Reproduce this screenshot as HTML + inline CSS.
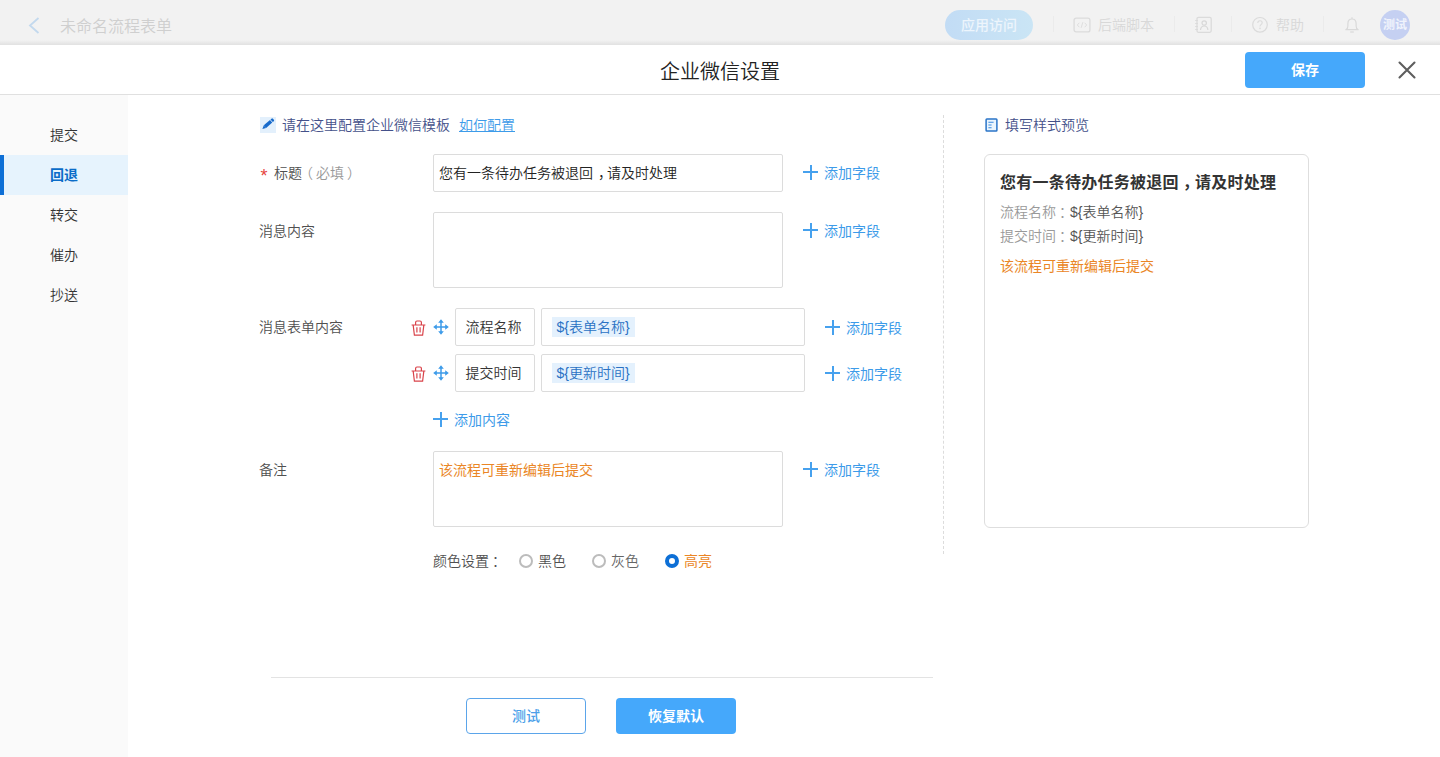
<!DOCTYPE html>
<html lang="zh-CN">
<head>
<meta charset="utf-8">
<title>企业微信设置</title>
<style>
*{box-sizing:border-box;margin:0;padding:0}
html,body{width:1440px;height:757px;overflow:hidden;background:#fff}
body{font-weight:350;font-family:"Liberation Sans","Noto Sans CJK SC",sans-serif;font-size:14px;color:#333;position:relative}
.abs{position:absolute;white-space:nowrap}
#topbar{left:0;top:0;width:1440px;height:45px;background:#f2f2f2}
#topshadow{left:0;top:40px;width:1440px;height:5px;background:linear-gradient(to bottom,rgba(0,0,0,0),rgba(0,0,0,.07))}
#header{left:0;top:45px;width:1440px;height:50px;background:#fff;border-bottom:1px solid #e0e0e0}
#side{left:0;top:95px;width:128px;height:662px;background:#fafafa}
.nav{left:0;width:128px;height:40px;line-height:40px;padding-left:50px;font-size:14px;color:#333}
.nav.on{background:#e6f3fd;color:#0a6cc8;font-weight:bold;border-left:4px solid #0d6fd6;padding-left:46px}
.sep{top:16px;width:1px;height:16px;background:#ebebeb}
.lbl{font-size:14px;color:#505050;line-height:20px}
.inp{border:1px solid #dcdcdc;border-radius:2px;background:#fff}
.add{color:#3d9be9;font-size:14px;font-weight:400;line-height:20px}
.plus{position:absolute;width:15px;height:15px}
.plus:before{content:"";position:absolute;left:0;top:6.5px;width:15px;height:2px;background:#46a1ee}
.plus:after{content:"";position:absolute;left:6.5px;top:0;width:2px;height:15px;background:#46a1ee}
.tag{background:#e4f1fd;color:#2a72c4;font-size:14px;line-height:20px;height:20px;width:82.5px;padding:0 0 0 4.5px}
</style>
</head>
<body>
<!-- top bar -->
<div class="abs" id="topbar"></div>
<div class="abs" id="topshadow"></div>
<svg class="abs" style="left:27px;top:17px" width="14" height="17" viewBox="0 0 14 17"><path d="M11.5 1 L3 8.5 L11.5 16" fill="none" stroke="#c3d9ee" stroke-width="1.8"/></svg>
<div class="abs" style="left:60px;top:15px;font-size:16px;line-height:24px;color:#cfcfcf">未命名流程表单</div>
<div class="abs" style="left:945px;top:10px;width:88px;height:30px;border-radius:15px;background:linear-gradient(to right,#c2dcf5,#cae5f5);color:#edf5fc;font-size:14px;font-weight:500;line-height:31px;text-align:center">应用访问</div>
<div class="abs sep" style="left:1053px"></div>
<svg class="abs" style="left:1073px;top:17px" width="18" height="16" viewBox="0 0 18 16"><rect x="1.1" y="1.1" width="15.8" height="13.8" rx="2" fill="none" stroke="#dbdbdb" stroke-width="1.3"/><path d="M6.3 5.8 L4.3 8 L6.3 10.2 M11.7 5.8 L13.7 8 L11.7 10.2 M9.8 5.2 L8.2 10.8" fill="none" stroke="#dedede" stroke-width="1"/></svg>
<div class="abs" style="left:1098px;top:15px;font-size:14px;line-height:20px;color:#d8d8d8">后端脚本</div>
<div class="abs sep" style="left:1174px"></div>
<svg class="abs" style="left:1194px;top:16px" width="19" height="18" viewBox="0 0 19 18"><rect x="3" y="1.3" width="14.2" height="15" rx="1.5" fill="none" stroke="#dbdbdb" stroke-width="1.3"/><path d="M1.2 4.5 H4 M1.2 7.5 H4 M1.2 10.5 H4 M1.2 13.5 H4" stroke="#dbdbdb" stroke-width="1"/><circle cx="10.2" cy="7" r="2.2" fill="none" stroke="#d8d8d8" stroke-width="1.2"/><path d="M6.5 14 Q6.8 10 10.2 10 Q13.6 10 13.9 14" fill="none" stroke="#d8d8d8" stroke-width="1.2"/></svg>
<div class="abs sep" style="left:1231px"></div>
<svg class="abs" style="left:1251px;top:16px" width="18" height="18" viewBox="0 0 18 18"><circle cx="9" cy="8.8" r="7.3" fill="none" stroke="#dbdbdb" stroke-width="1.2"/><path d="M6.8 7 Q6.8 4.8 9 4.8 Q11.2 4.8 11.2 6.8 Q11.2 8 9.9 8.7 Q9 9.2 9 10.4" fill="none" stroke="#dbdbdb" stroke-width="1.1"/><circle cx="9" cy="12.4" r=".8" fill="#dbdbdb"/></svg>
<div class="abs" style="left:1276px;top:15px;font-size:14px;line-height:20px;color:#d8d8d8">帮助</div>
<div class="abs sep" style="left:1323px"></div>
<svg class="abs" style="left:1344px;top:16px" width="16" height="18" viewBox="0 0 16 18"><path d="M8 1.2 V2.8 M1.8 13.7 Q3.9 12.6 3.9 10 V7.6 Q3.9 3 8 3 Q12.1 3 12.1 7.6 V10 Q12.1 12.6 14.2 13.7 Z" fill="none" stroke="#d9d9d9" stroke-width="1.2" stroke-linejoin="round"/><path d="M6.2 16 H9.8" stroke="#d9d9d9" stroke-width="1.2"/></svg>
<div class="abs" style="left:1380px;top:10px;width:30px;height:30px;border-radius:15px;background:#c5d0f2;color:#f0f3fc;font-size:12px;font-weight:bold;line-height:31px;text-align:center">测试</div>

<!-- header -->
<div class="abs" id="header"></div>
<div class="abs" style="left:0;top:59px;width:1440px;text-align:center;font-size:20px;font-weight:350;line-height:26px;color:#222">企业微信设置</div>
<div class="abs" style="left:1245px;top:52px;width:120px;height:36px;background:#45a8fb;border-radius:4px;color:#fff;font-size:14px;font-weight:bold;line-height:36px;text-align:center">保存</div>
<svg class="abs" style="left:1398px;top:61px" width="18" height="18" viewBox="0 0 18 18"><path d="M1.5 1.5 L16.5 16.5 M16.5 1.5 L1.5 16.5" stroke="#5e5e5e" stroke-width="2.1" stroke-linecap="round" fill="none"/></svg>

<!-- sidebar -->
<div class="abs" id="side"></div>
<div class="abs nav" style="top:115px">提交</div>
<div class="abs nav on" style="top:155px">回退</div>
<div class="abs nav" style="top:195px">转交</div>
<div class="abs nav" style="top:235px">催办</div>
<div class="abs nav" style="top:275px">抄送</div>

<!-- form -->
<div class="abs" style="left:260px;top:117px;width:16px;height:16px;background:#e3f0fc"></div>
<svg class="abs" style="left:260px;top:117px" width="16" height="16" viewBox="0 0 16 16"><g transform="translate(2.4,11.9) rotate(-41.2)" fill="#176acb"><path d="M0 0 L3.4 -1.75 V1.75 Z"/><rect x="3.4" y="-1.75" width="8.2" height="3.5"/><path d="M12.3 -1.75 H13.6 Q14.6 -1.75 14.6 -.75 V.75 Q14.6 1.75 13.6 1.75 H12.3 Z"/></g></svg>
<div class="abs" style="left:282px;top:115px;font-size:14px;line-height:20px;color:#44518a">请在这里配置企业微信模板</div>
<div class="abs" style="left:459px;top:115px;font-size:14px;line-height:20px;color:#3d9be9;text-decoration:underline">如何配置</div>

<div class="abs" style="left:260.5px;top:166px;font-size:18px;line-height:20px;color:#e64340">*</div>
<div class="abs lbl" style="left:274px;top:163px">标题<span style="color:#999"><span style="margin-left:-3px;margin-right:3px">（</span>必填<span style="margin-left:3px">）</span></span></div>
<div class="abs inp" style="left:433px;top:154px;width:350px;height:38px;padding:0 5px;line-height:36px;font-size:14px;color:#222">您有一条待办任务被退回<span style="position:relative;left:5px">，</span>请及时处理</div>
<i class="plus" style="left:803px;top:164.5px"></i><div class="abs add" style="left:824px;top:163px">添加字段</div>

<div class="abs lbl" style="left:259px;top:221px">消息内容</div>
<div class="abs inp" style="left:433px;top:212px;width:350px;height:76px"></div>
<i class="plus" style="left:803px;top:222.5px"></i><div class="abs add" style="left:824px;top:221px">添加字段</div>

<div class="abs lbl" style="left:259px;top:317px">消息表单内容</div>
<svg class="abs" style="left:411px;top:319.7px" width="15" height="16" viewBox="0 0 15 16"><path d="M.6 5 H14.4 M4.6 4.6 V2.4 Q4.6 1 6 1 H9 Q10.4 1 10.4 2.4 V4.6 M2.2 5.4 L3.4 15.2 H11.6 L12.8 5.4 M5.9 7.2 V12.6 M9.1 7.2 V12.6" fill="none" stroke="#d9434a" stroke-width="1.2"/></svg>
<svg class="abs" style="left:432.5px;top:319px" width="16" height="16" viewBox="0 0 16 16"><path d="M8 2 V14 M2 8 H14" stroke="#3d9be9" stroke-width="1.5" fill="none"/><path d="M8 .2 L10.8 3.8 H5.2 Z M8 15.8 L10.8 12.2 H5.2 Z M.2 8 L3.8 5.2 V10.8 Z M15.8 8 L12.2 5.2 V10.8 Z" fill="#3d9be9"/></svg>
<div class="abs inp" style="left:455px;top:308px;width:80px;height:38px;line-height:36px;padding-left:9.5px">流程名称</div>
<div class="abs inp" style="left:541px;top:308px;width:264px;height:38px"></div>
<div class="abs tag" style="left:552px;top:317px">${表单名称}</div>
<i class="plus" style="left:825px;top:319.5px"></i><div class="abs add" style="left:846px;top:318px">添加字段</div>

<svg class="abs" style="left:411px;top:365.7px" width="15" height="16" viewBox="0 0 15 16"><path d="M.6 5 H14.4 M4.6 4.6 V2.4 Q4.6 1 6 1 H9 Q10.4 1 10.4 2.4 V4.6 M2.2 5.4 L3.4 15.2 H11.6 L12.8 5.4 M5.9 7.2 V12.6 M9.1 7.2 V12.6" fill="none" stroke="#d9434a" stroke-width="1.2"/></svg>
<svg class="abs" style="left:432.5px;top:365px" width="16" height="16" viewBox="0 0 16 16"><path d="M8 2 V14 M2 8 H14" stroke="#3d9be9" stroke-width="1.5" fill="none"/><path d="M8 .2 L10.8 3.8 H5.2 Z M8 15.8 L10.8 12.2 H5.2 Z M.2 8 L3.8 5.2 V10.8 Z M15.8 8 L12.2 5.2 V10.8 Z" fill="#3d9be9"/></svg>
<div class="abs inp" style="left:455px;top:354px;width:80px;height:38px;line-height:36px;padding-left:9.5px">提交时间</div>
<div class="abs inp" style="left:541px;top:354px;width:264px;height:38px"></div>
<div class="abs tag" style="left:552px;top:363px">${更新时间}</div>
<i class="plus" style="left:825px;top:365.5px"></i><div class="abs add" style="left:846px;top:364px">添加字段</div>

<i class="plus" style="left:433px;top:411.5px"></i><div class="abs add" style="left:454px;top:410px">添加内容</div>

<div class="abs lbl" style="left:259px;top:460px">备注</div>
<div class="abs inp" style="left:433px;top:451px;width:350px;height:76px;padding:8px 5px;line-height:20px;font-size:14px;color:#ea8626;font-weight:400">该流程可重新编辑后提交</div>
<i class="plus" style="left:803px;top:461.5px"></i><div class="abs add" style="left:824px;top:460px">添加字段</div>

<div class="abs lbl" style="left:433px;top:551px">颜色设置<span style="margin-left:3px">：</span></div>
<div class="abs" style="left:518.5px;top:553.5px;width:14px;height:14px;border:2px solid #bcbcbc;border-radius:50%"></div>
<div class="abs lbl" style="left:538px;top:551px">黑色</div>
<div class="abs" style="left:591.5px;top:553.5px;width:14px;height:14px;border:2px solid #bcbcbc;border-radius:50%"></div>
<div class="abs lbl" style="left:611px;top:551px;color:#666">灰色</div>
<div class="abs" style="left:664.5px;top:553.5px;width:14px;height:14px;border:4px solid #0d6fd6;border-radius:50%"></div>
<div class="abs lbl" style="left:684px;top:551px;color:#ea8626;font-weight:400">高亮</div>

<div class="abs" style="left:271px;top:677px;width:662px;height:1px;background:#e3e3e3"></div>
<div class="abs" style="left:466px;top:698px;width:120px;height:36px;border:1px solid #5ba5ea;border-radius:4px;color:#4a9fe9;font-size:14px;font-weight:500;line-height:34px;text-align:center;background:#fff">测试</div>
<div class="abs" style="left:616px;top:698px;width:120px;height:36px;background:#45a8fb;border-radius:4px;color:#fff;font-size:14px;font-weight:bold;line-height:36px;text-align:center">恢复默认</div>

<!-- divider -->
<div class="abs" style="left:943px;top:115px;width:0;height:439px;border-left:1px dashed #dcdcdc"></div>

<!-- preview -->
<svg class="abs" style="left:985px;top:118px" width="13" height="14" viewBox="0 0 13 14"><rect x="1.1" y=".9" width="10.8" height="12.2" rx=".8" fill="#eaf5fe" stroke="#2a74c8" stroke-width="1.5"/><path d="M3.4 4.2 H8.6 M3.4 7 H6.6 M3.4 9.7 H6.6" stroke="#3d8be0" stroke-width="1.1"/></svg>
<div class="abs" style="left:1005px;top:115px;font-size:14px;line-height:20px;color:#44518a">填写样式预览</div>
<div class="abs" style="left:984px;top:154px;width:325px;height:374px;border:1px solid #dedede;border-radius:6px;background:#fff"></div>
<div class="abs" style="left:1000px;top:171px;font-size:16px;font-weight:bold;line-height:24px;color:#333;letter-spacing:.25px">您有一条待办任务被退回<span style="position:relative;left:4px">，</span>请及时处理</div>
<div class="abs" style="left:1000px;top:202px;font-size:14px;line-height:20px;color:#999">流程名称<span style="margin-left:3px;margin-right:-3px">：</span><span style="color:#555">${表单名称}</span></div>
<div class="abs" style="left:1000px;top:226px;font-size:14px;line-height:20px;color:#999">提交时间<span style="margin-left:3px;margin-right:-3px">：</span><span style="color:#555">${更新时间}</span></div>
<div class="abs" style="left:1000px;top:256px;font-size:14px;line-height:20px;color:#ea8626;font-weight:400">该流程可重新编辑后提交</div>
</body>
</html>
